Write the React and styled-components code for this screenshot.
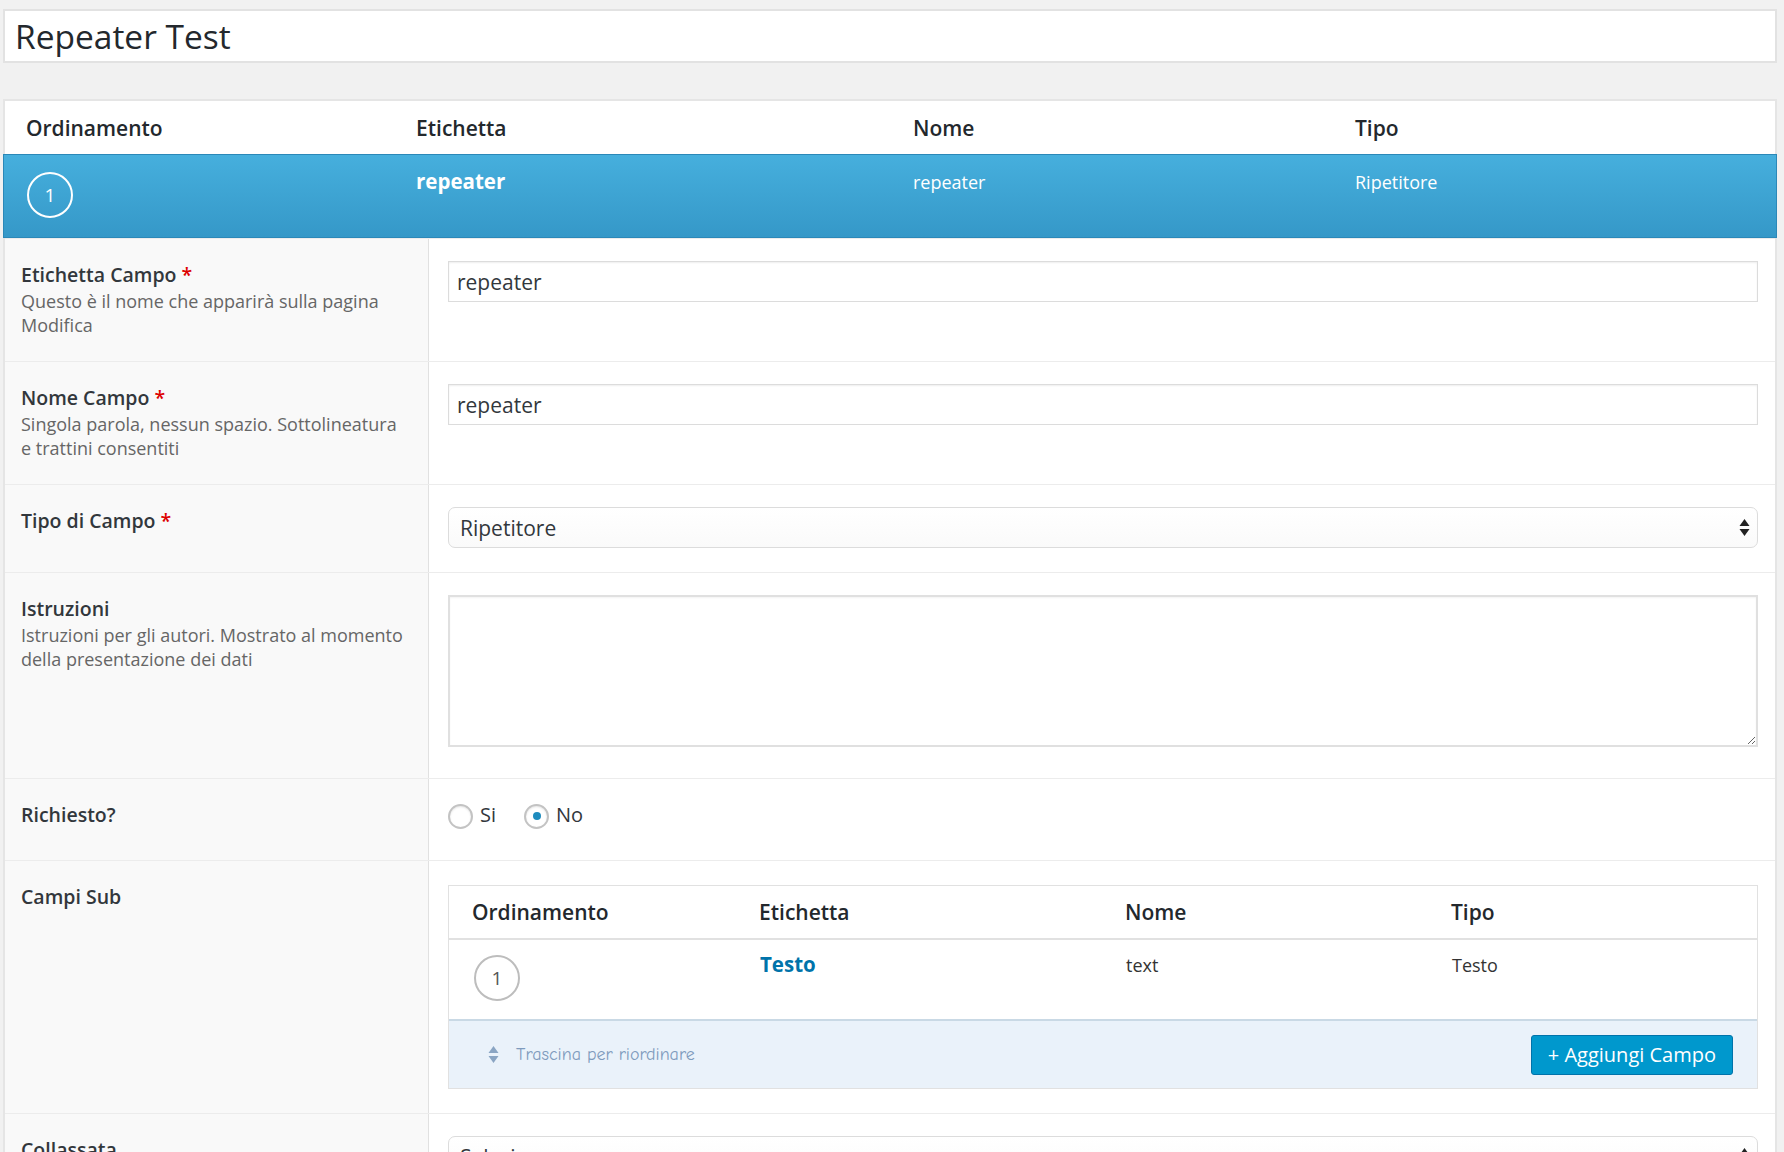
import React from 'react';
import styled, { createGlobalStyle } from 'styled-components';

const GlobalStyle = createGlobalStyle`
  html, body {
    margin: 0;
    padding: 0;
    background: #f1f1f1;
  }
  body {
    font-family: "Open Sans", "Noto Sans", sans-serif;
    color: #23282d;
    overflow: hidden;
  }
  * {
    box-sizing: border-box;
  }
`;

const fields = [
  { label: 'Etichetta Campo', required: true, desc: 'Questo è il nome che apparirà sulla pagina Modifica', kind: 'input', value: 'repeater' },
  { label: 'Nome Campo', required: true, desc: 'Singola parola, nessun spazio. Sottolineatura e trattini consentiti', kind: 'input', value: 'repeater' },
  { label: 'Tipo di Campo', required: true, kind: 'select', value: 'Ripetitore' },
  { label: 'Istruzioni', desc: 'Istruzioni per gli autori. Mostrato al momento della presentazione dei dati', kind: 'textarea' },
  { label: 'Richiesto?', kind: 'radio' },
  { label: 'Campi Sub', kind: 'sub' },
  { label: 'Collassata', kind: 'select', value: 'Selezione' },
];

const Arrows = ({ color = '#222', w = 11, h = 19 }) => (
  <svg width={w} height={h} viewBox="0 0 11 19">
    <path d="M5.5 1 L10.5 8 L0.5 8 Z" fill={color} />
    <path d="M0.5 11 L10.5 11 L5.5 18 Z" fill={color} />
  </svg>
);

const SelectBox = ({ value }) => (
  <SelectWrap>
    <Select defaultValue={value}>
      <option>{value}</option>
    </Select>
    <SelectIcon>
      <Arrows />
    </SelectIcon>
  </SelectWrap>
);

const SubFields = () => (
  <SubTable>
    <SubHead>
      <SubHeadCell>Ordinamento</SubHeadCell>
      <SubHeadCell>Etichetta</SubHeadCell>
      <SubHeadCell>Nome</SubHeadCell>
      <SubHeadCell>Tipo</SubHeadCell>
    </SubHead>
    <SubRow>
      <div><Order>1</Order></div>
      <SubLink>Testo</SubLink>
      <SubCell>text</SubCell>
      <SubCell>Testo</SubCell>
    </SubRow>
    <SubFooter>
      <DragHint>
        <Arrows color="#8aa5c3" w={11} h={21} />
        <span>Trascina per riordinare</span>
      </DragHint>
      <AddButton>+ Aggiungi Campo</AddButton>
    </SubFooter>
  </SubTable>
);

const renderValue = (f) => {
  switch (f.kind) {
    case 'input':
      return <TextInput defaultValue={f.value} />;
    case 'select':
      return <SelectBox value={f.value} />;
    case 'textarea':
      return <TextArea />;
    case 'radio':
      return (
        <RadioGroup>
          <RadioOption><RadioMark />Si</RadioOption>
          <RadioOption><RadioMark checked />No</RadioOption>
        </RadioGroup>
      );
    case 'sub':
      return <SubFields />;
    default:
      return null;
  }
};

const App = () => {
  return (
    <Page>
      <GlobalStyle />
      <TitleBox>Repeater Test</TitleBox>
      <Panel>
        <ListHead>
          <HeadCell>Ordinamento</HeadCell>
          <HeadCell>Etichetta</HeadCell>
          <HeadCell>Nome</HeadCell>
          <HeadCell>Tipo</HeadCell>
        </ListHead>
        <ActiveRow>
          <div><Order light>1</Order></div>
          <ActiveLabel>repeater</ActiveLabel>
          <ActiveCell>repeater</ActiveCell>
          <ActiveCell>Ripetitore</ActiveCell>
        </ActiveRow>
        {fields.map((f) => (
          <FormRow key={f.label}>
            <LabelCell>
              <Label>
                {f.label}
                {f.required && <Required> *</Required>}
              </Label>
              {f.desc && <Description>{f.desc}</Description>}
            </LabelCell>
            <ValueCell top={f.kind === 'sub' ? 24 : 22}>{renderValue(f)}</ValueCell>
          </FormRow>
        ))}
      </Panel>
    </Page>
  );
};

const Page = styled.div`
  padding: 9px 7px 0 3px;
`;

const TitleBox = styled.div`
  height: 54px;
  display: flex;
  align-items: center;
  padding-left: 10px;
  background: #fff;
  border: 2px solid #e2e2e2;
  font-size: 33.5px;
  color: #23282d;
  margin-bottom: 36px;
`;

const Panel = styled.div`
  background: #fff;
  border: 2px solid #e5e5e5;
`;

const ListHead = styled.div`
  display: grid;
  grid-template-columns: 390px 497px 442px 1fr;
  align-items: center;
  height: 53px;
  padding-left: 21px;
`;

const HeadCell = styled.div`
  font-size: 21px;
  font-weight: 600;
  color: #23282d;
`;

const ActiveRow = styled.div`
  display: grid;
  grid-template-columns: 390px 497px 442px 1fr;
  height: 84px;
  padding: 12px 0 0 22px;
  background: linear-gradient(to bottom, #46afdd, #3598c8);
  border: 1px solid #2b88b8;
  margin: 0 -2px 0 -2px;
  color: #fff;
`;

const ActiveLabel = styled.div`
  font-size: 20.5px;
  font-weight: 700;
  line-height: 28px;
`;

const ActiveCell = styled.div`
  font-size: 18px;
  line-height: 28px;
  padding-top: 1px;
`;

const Order = styled.div`
  width: 46px;
  height: 46px;
  margin-top: 5px;
  margin-left: 1px;
  border-radius: 50%;
  border: 2px solid ${(p) => (p.light ? '#fff' : '#bdbdbd')};
  color: ${(p) => (p.light ? '#fff' : '#555')};
  background: ${(p) => (p.light ? 'transparent' : '#fff')};
  display: flex;
  align-items: center;
  justify-content: center;
  font-size: 19px;
`;

const FormRow = styled.div`
  display: grid;
  grid-template-columns: 424px 1fr;
  border-top: 1px solid #ececec;
  &:first-of-type {
    border-top: none;
  }
`;

const LabelCell = styled.div`
  background: #f9f9f9;
  border-right: 1px solid #e1e1e1;
  padding: 22px 20px 24px 16px;
`;

const Label = styled.div`
  font-size: 19.5px;
  font-weight: 600;
  line-height: 27px;
  color: #32373c;
`;

const Required = styled.span`
  color: #dd0000;
`;

const Description = styled.div`
  font-size: 18px;
  line-height: 24px;
  color: #666;
  margin-top: 1px;
`;

const ValueCell = styled.div`
  padding: ${(p) => p.top}px 17px 24px 19px;
`;

const TextInput = styled.input`
  display: block;
  width: 100%;
  height: 41px;
  padding: 0 8px;
  border: 1px solid #dcdcdc;
  box-shadow: inset 0 1px 2px rgba(0, 0, 0, 0.07);
  font-family: inherit;
  font-size: 21px;
  color: #32373c;
  outline: none;
`;

const SelectWrap = styled.div`
  position: relative;
`;

const Select = styled.select`
  display: block;
  width: 100%;
  height: 41px;
  padding: 0 40px 0 11px;
  appearance: none;
  border: 1px solid #dcdcdc;
  border-radius: 7px;
  background: linear-gradient(to bottom, #fff, #fafafa);
  font-family: inherit;
  font-size: 21px;
  color: #32373c;
  outline: none;
`;

const SelectIcon = styled.div`
  position: absolute;
  right: 8px;
  top: 11px;
  pointer-events: none;
  display: flex;
`;

const TextArea = styled.textarea`
  display: block;
  width: 100%;
  height: 152px;
  margin-bottom: 7px;
  border: 2px solid #e0e0e0;
  box-shadow: inset 0 1px 2px rgba(0, 0, 0, 0.05);
  outline: none;
  font-family: inherit;
  font-size: 18px;
`;

const RadioGroup = styled.div`
  display: flex;
  align-items: center;
  gap: 28px;
  height: 35px;
  margin-top: -4px;
  margin-bottom: 4px;
`;

const RadioOption = styled.label`
  display: flex;
  align-items: center;
  gap: 7px;
  font-size: 20px;
  color: #32373c;
`;

const RadioMark = styled.span`
  position: relative;
  width: 25px;
  height: 25px;
  margin-top: 3px;
  border-radius: 50%;
  border: 2px solid #c3c3c3;
  background: #fff;
  box-shadow: inset 0 1px 2px rgba(0, 0, 0, 0.1);
  &::after {
    content: '';
    display: ${(p) => (p.checked ? 'block' : 'none')};
    position: absolute;
    left: 6.5px;
    top: 6.5px;
    width: 8px;
    height: 8px;
    border-radius: 50%;
    background: #1e8cbe;
  }
`;

const SubTable = styled.div`
  border: 1px solid #e1e1e1;
`;

const SubHead = styled.div`
  display: grid;
  grid-template-columns: 287px 366px 326px 1fr;
  align-items: center;
  height: 54px;
  padding-left: 23px;
  border-bottom: 2px solid #e1e1e1;
`;

const SubHeadCell = styled.div`
  font-size: 21px;
  font-weight: 600;
  color: #23282d;
`;

const SubRow = styled.div`
  display: grid;
  grid-template-columns: 287px 366px 326px 1fr;
  height: 79px;
  padding: 10px 0 0 24px;
`;

const SubLink = styled.div`
  font-size: 20.5px;
  font-weight: 700;
  line-height: 28px;
  color: #0073aa;
`;

const SubCell = styled.div`
  font-size: 18px;
  line-height: 28px;
  padding-top: 1px;
  color: #333;
`;

const SubFooter = styled.div`
  display: flex;
  align-items: center;
  justify-content: space-between;
  height: 69px;
  padding: 0 24px 0 39px;
  background: #eaf2fa;
  border-top: 2px solid #c9d9e5;
`;

const DragHint = styled.div`
  display: flex;
  align-items: center;
  gap: 17px;
  font-family: "Comic Sans MS", "Comic Neue", cursive;
  font-size: 18px;
  color: #7f9bbd;
`;

const AddButton = styled.button`
  height: 40px;
  padding: 0 16px;
  background: #0098cd;
  border: 1px solid #0073aa;
  border-radius: 3px;
  color: #fff;
  font-family: "Open Sans", "Noto Sans", sans-serif;
  font-size: 20px;
  cursor: pointer;
`;

export default App;
